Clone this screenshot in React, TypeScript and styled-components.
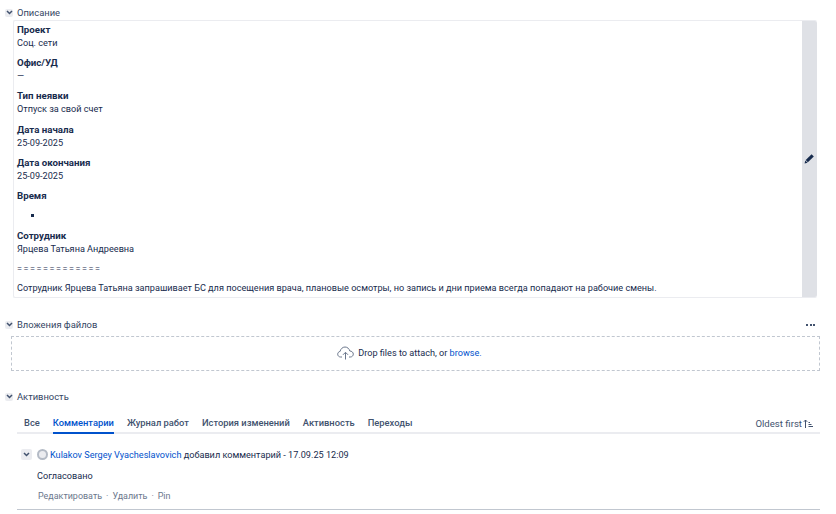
import React from 'react';
import styled, { createGlobalStyle } from 'styled-components';

const GlobalStyle = createGlobalStyle`
  html, body {
    margin: 0;
    padding: 0;
    background: #fff;
  }
  body {
    font-family: Roboto, "Noto Sans", sans-serif;
    font-size: 9.15px;
    color: #172b4d;
  }
`;

const Page = styled.div`
  width: 836px;
  height: 514px;
  overflow: hidden;
  padding: 6px 16px 0 5px;
  box-sizing: border-box;
`;

const SectionHeader = styled.div`
  display: flex;
  align-items: center;
  gap: 4px;
  height: 13px;
`;

const Toggle = styled.span<{ $size?: number }>`
  display: inline-flex;
  align-items: center;
  justify-content: center;
  flex: none;
  width: ${(p) => p.$size ?? 8}px;
  height: ${(p) => p.$size ?? 8}px;
  background: #ebecf0;
  border-radius: 2px;
`;

const SectionTitle = styled.span`
  color: #344563;
  font-size: 9.4px;
  flex: 1;
`;

const MoreDots = styled.span`
  display: flex;
  gap: 1.5px;
  margin-right: 5px;
`;

const Dot = styled.i`
  width: 2px;
  height: 2px;
  background: #42526e;
`;

const DescriptionBox = styled.div`
  display: flex;
  margin: 1px 3px 0 8px;
  height: 276px;
  border: 1px solid #ebecf0;
  border-right: 0;
  border-radius: 2px;
`;

const Content = styled.div`
  flex: 1;
  padding: 2px 3px;
  line-height: 13.35px;
`;

const Para = styled.p`
  margin: 0 0 6.5px;
`;

const ValueLine = styled.span`
  display: block;
  margin: 0.7px 0 -0.7px;
`;

const Rule = styled(Para)`
  letter-spacing: 1.5px;
  padding-top: 0.7px;
  margin-bottom: 5.8px;
`;

const Label = styled.strong`
  display: block;
  font-size: 9.7px;
  font-weight: 700;
`;

const BulletList = styled.ul`
  margin: 0 0 6.5px;
  padding: 0 0 0 26px;
  list-style: square;
`;

const BulletItem = styled.li`
  height: 13.35px;
`;

const EditRail = styled.div`
  width: 15px;
  background: #dfe1e6;
  display: flex;
  align-items: center;
  justify-content: center;
  padding-bottom: 2px;
  border-radius: 0 2px 2px 0;
`;

const AttachSection = styled.section`
  margin-top: 20px;
`;

const DropZone = styled.div`
  margin: 5px 0 0 6px;
  padding: 0 12px 1px 0;
  height: 32px;
  border: 1px dashed #c1c7d0;
  display: flex;
  align-items: center;
  justify-content: center;
  gap: 4px;
`;

const Link = styled.span`
  color: #0052cc;
`;

const ActivitySection = styled.section`
  margin-top: 19px;
`;

const Tabs = styled.div`
  display: flex;
  align-items: center;
  gap: 13px;
  margin: 11px 0 0 12px;
  padding: 0 7px 0 7px;
  height: 18px;
  border-bottom: 2px solid #ebecf0;
`;

const Tab = styled.span<{ $active?: boolean }>`
  position: relative;
  color: ${(p) => (p.$active ? '#0052cc' : '#42526e')};
  font-size: 9.35px;
  font-weight: 500;
  line-height: 18px;
  ${(p) =>
    p.$active &&
    `&::after {
      content: '';
      position: absolute;
      left: 0;
      right: 0;
      bottom: -2px;
      height: 2px;
      background: #0052cc;
    }`}
`;

const SortButton = styled.span`
  margin-left: auto;
  display: flex;
  align-items: center;
  gap: 1px;
  font-size: 9.6px;
  color: #42526e;
`;

const CommentHead = styled.div`
  display: flex;
  align-items: center;
  margin: 14px 0 0 16px;
  height: 13px;
`;

const Avatar = styled.span`
  width: 7px;
  height: 7px;
  margin: 0 2px 0 5px;
  border: 2px solid #b3bac5;
  border-radius: 50%;
  background: #ebecf0;
  flex: none;
`;

const CommentBody = styled.div`
  margin: 9px 0 0 32px;
  line-height: 13px;
`;

const Actions = styled.div`
  display: flex;
  gap: 4px;
  margin: 7px 0 0 33px;
  font-size: 8.95px;
  line-height: 13px;
  color: #6b778c;
`;

const CommentEnd = styled.div`
  margin: 6px 0 0 12px;
  border-bottom: 1px solid #c1c7d0;
`;

const Chevron = () => (
  <svg width="7" height="5" viewBox="0 0 7 5">
    <path d="M1 1l2.5 2.5L6 1" fill="none" stroke="#42526e" strokeWidth="1.5" />
  </svg>
);

const Pencil = () => (
  <svg width="11" height="11" viewBox="0 0 11 11">
    <path d="M7.6 1.2l2.2 2.2-5.9 5.9-2.2-2.2z" fill="#172b4d" />
    <path d="M1.3 7.4l2.3 2.3-3 .7z" fill="#172b4d" />
  </svg>
);

const CloudUpload = () => (
  <svg width="17" height="14" viewBox="0 0 17 14" fill="none" stroke="#6b778c" strokeWidth="1">
    <path d="M5 11H3.6C2 11 .7 9.8.7 8.2c0-1.4 1-2.6 2.4-2.8C3.5 3 5.600 1 8 1c2.300 0 4.300 1.700 4.800 4 1.900 0 3.500 1.400 3.500 3.100 0 1.600-1.300 2.900-3 2.900H12" />
    <path d="M8.500 13.500V6.500M6 8.800l2.500-2.500L11 8.800" />
  </svg>
);

const SortIcon = () => (
  <svg width="10" height="9" viewBox="0 0 10 9" fill="none" stroke="#42526e" strokeWidth="1">
    <path d="M2.500 9V1M.8 2.800L2.500 1l1.700 1.800" />
    <path d="M5.500 3.500h1.500M5.500 5.500h3M5.500 7.500h4.500" />
  </svg>
);

const fields: [string, string][] = [
  ['Проект', 'Соц. сети'],
  ['Офис/УД', '—'],
  ['Тип неявки', 'Отпуск за свой счет'],
  ['Дата начала', '25-09-2025'],
  ['Дата окончания', '25-09-2025'],
];

const tabs = ['Все', 'Комментарии', 'Журнал работ', 'История изменений', 'Активность', 'Переходы'];

const App = () => (
  <Page>
    <GlobalStyle />
    <section>
      <SectionHeader>
        <Toggle>
          <Chevron />
        </Toggle>
        <SectionTitle>Описание</SectionTitle>
      </SectionHeader>
      <DescriptionBox>
        <Content>
          {fields.map(([label, value]) => (
            <Para key={label}>
              <Label>{label}</Label>
              <ValueLine>{value}</ValueLine>
            </Para>
          ))}
          <Para>
            <Label>Время</Label>
          </Para>
          <BulletList>
            <BulletItem />
          </BulletList>
          <Para>
            <Label>Сотрудник</Label>
            <ValueLine>Ярцева Татьяна Андреевна</ValueLine>
          </Para>
          <Rule>=============</Rule>
          <Para>
            Сотрудник Ярцева Татьяна запрашивает БС для посещения врача, плановые осмотры, но запись и дни приема
            всегда попадают на рабочие смены.
          </Para>
        </Content>
        <EditRail>
          <Pencil />
        </EditRail>
      </DescriptionBox>
    </section>
    <AttachSection>
      <SectionHeader>
        <Toggle>
          <Chevron />
        </Toggle>
        <SectionTitle>Вложения файлов</SectionTitle>
        <MoreDots>
          <Dot />
          <Dot />
          <Dot />
        </MoreDots>
      </SectionHeader>
      <DropZone>
        <CloudUpload />
        <span>
          Drop files to attach, or <Link>browse.</Link>
        </span>
      </DropZone>
    </AttachSection>
    <ActivitySection>
      <SectionHeader>
        <Toggle>
          <Chevron />
        </Toggle>
        <SectionTitle>Активность</SectionTitle>
      </SectionHeader>
      <Tabs>
        {tabs.map((t) => (
          <Tab key={t} $active={t === 'Комментарии'}>
            {t}
          </Tab>
        ))}
        <SortButton>
          Oldest first
          <SortIcon />
        </SortButton>
      </Tabs>
      <CommentHead>
        <Toggle $size={11}>
          <Chevron />
        </Toggle>
        <Avatar />
        <span>
          <Link>Kulakov Sergey Vyacheslavovich</Link> добавил комментарий - 17.09.25 12:09
        </span>
      </CommentHead>
      <CommentBody>Согласовано</CommentBody>
      <Actions>
        <span>Редактировать</span>
        <span>·</span>
        <span>Удалить</span>
        <span>·</span>
        <span>Pin</span>
      </Actions>
      <CommentEnd />
    </ActivitySection>
  </Page>
);

export default App;
